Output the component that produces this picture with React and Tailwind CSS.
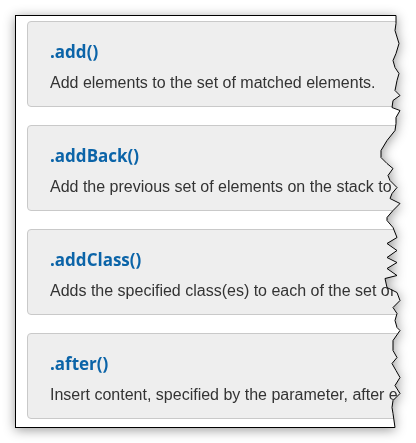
const methods = [
  { name: '.add()', desc: 'Add elements to the set of matched elements.' },
  { name: '.addBack()', desc: 'Add the previous set of elements on the stack to the current set, optionally filtered by a selector.' },
  { name: '.addClass()', desc: 'Adds the specified class(es) to each of the set of matched elements.' },
  { name: '.after()', desc: 'Insert content, specified by the parameter, after each element in the set of matched elements.' },
]

// torn right edge, in frame coords
const tear = [
  [381, 0], [381, 8], [380, 15], [384, 28], [381, 38], [378, 45], [380, 52], [384, 58], [382, 65], [380, 75],
  [385, 80], [378, 85], [377, 92], [385, 95], [381, 102], [381, 108], [380, 115], [372, 125], [366, 135], [366, 142],
  [372, 148], [378, 153], [373, 160], [375, 165], [382, 172], [377, 178], [375, 183], [385, 188], [378, 195], [372, 202],
  [372, 205], [378, 212], [382, 222], [372, 228], [382, 235], [372, 242], [382, 247], [372, 253], [382, 260], [370, 263],
  [372, 272], [382, 277], [385, 285], [378, 292], [382, 298], [380, 305], [382, 312], [385, 315], [378, 325], [378, 335],
  [382, 342], [377, 348], [381, 355], [385, 362], [380, 370], [385, 378], [378, 385], [377, 392], [378, 398], [380, 412],
]

function MethodCard({ name, desc }) {
  return (
    <div className="h-[86px] w-[420px] shrink-0 rounded-[4px] border border-[#c9c9c9] bg-[#eeeeee] px-[22px] pt-[18px]">
      <div className="[font-family:'Open_Sans',sans-serif] text-[17px] leading-6 font-bold text-[#0b64a8]">{name}</div>
      <div className="mt-[9px] whitespace-nowrap [font-family:'Liberation_Sans',Arial,sans-serif] text-[16px] leading-5 text-[#333333]">
        {desc}
      </div>
    </div>
  )
}

export default function App() {
  return (
    <div className="h-[443px] w-[416px] bg-white pt-[15px] pl-[15px]">
      <div className="relative h-[413px] w-[392px] drop-shadow-[0_2px_6px_rgba(0,0,0,0.4)]">
        <div className="flex h-[413px] w-[392px] flex-col gap-[18px] overflow-hidden border-y border-l border-black bg-white pt-[5px] pl-[11px] [clip-path:polygon(0_0,381px_0,381px_8px,380px_15px,384px_28px,381px_38px,378px_45px,380px_52px,384px_58px,382px_65px,380px_75px,385px_80px,378px_85px,377px_92px,385px_95px,381px_102px,381px_108px,380px_115px,372px_125px,366px_135px,366px_142px,372px_148px,378px_153px,373px_160px,375px_165px,382px_172px,377px_178px,375px_183px,385px_188px,378px_195px,372px_202px,372px_205px,378px_212px,382px_222px,372px_228px,382px_235px,372px_242px,382px_247px,372px_253px,382px_260px,370px_263px,372px_272px,382px_277px,385px_285px,378px_292px,382px_298px,380px_305px,382px_312px,385px_315px,378px_325px,378px_335px,382px_342px,377px_348px,381px_355px,385px_362px,380px_370px,385px_378px,378px_385px,377px_392px,378px_398px,380px_413px,0_413px)]">
          {methods.map((m) => (
            <MethodCard key={m.name} name={m.name} desc={m.desc} />
          ))}
        </div>
        <svg className="pointer-events-none absolute top-0 left-0" width="392" height="413" viewBox="0 0 392 413">
          <polyline
            points={tear.map((p) => `${p[0]},${p[1] + 0.5}`).join(' ')}
            fill="none"
            stroke="#000"
            strokeWidth="1"
          />
        </svg>
      </div>
    </div>
  )
}
